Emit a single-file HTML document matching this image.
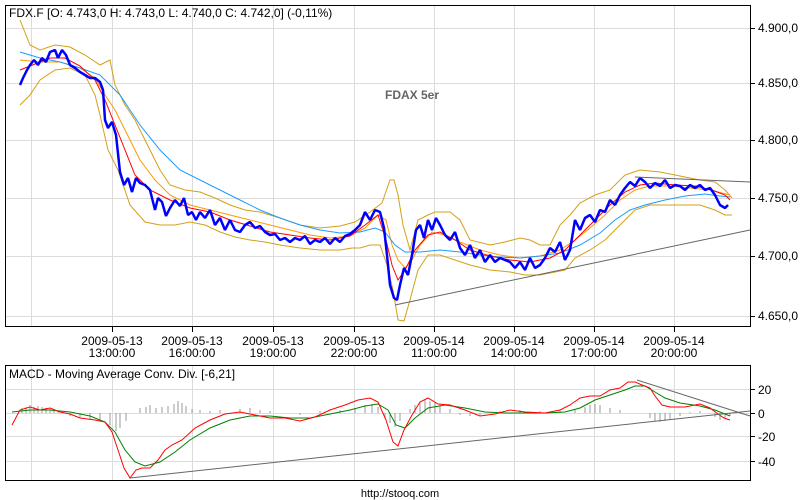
<!DOCTYPE html>
<html><head><meta charset="utf-8"><style>
html,body{margin:0;padding:0;background:#fff;width:800px;height:500px;overflow:hidden}
svg text{font-family:"Liberation Sans",sans-serif;font-size:12px;fill:#000}
</style></head><body>
<svg width="800" height="500" xmlns="http://www.w3.org/2000/svg">
<rect width="800" height="500" fill="#fff"/>
<g stroke="#dcdcdc" stroke-width="1">
<path d="M31.5 5V327M112.5 5V327M192.5 5V327M273.5 5V327M354.5 5V327M434.5 5V327M514.5 5V327M594.5 5V327M674.5 5V327"/>
<path d="M5 28.5H750M5 83.5H750M5 140.5H750M5 198.5H750M5 256.5H750M5 316.5H750"/>
<path d="M31.5 365V480M112.5 365V480M192.5 365V480M273.5 365V480M354.5 365V480M434.5 365V480M514.5 365V480M594.5 365V480M674.5 365V480"/>
<path d="M5 389.5H750M5 413.5H750M5 436.5H750M5 461.5H750"/>
</g>
<!-- bands -->
<g fill="none" stroke-width="1">
<path stroke="#d4a017" d="M20 20L30 45L40 50L55 45L70 47L85 55L100 65L110 60L115 85L125 105L135 120L150 150L160 170L170 185L185 190L200 192L215 198L230 205L245 210L260 212L280 218L300 225L320 228L340 226L355 222L370 212L382 203L390 180L394 180L398 195L403 225L410 250L418 220L428 215L435 212L450 212L460 220L470 240L490 245L505 242L520 238L530 240L540 245L550 245L560 225L570 215L580 203L595 195L610 190L625 175L640 170L660 172L680 176L700 180L715 182L725 190L732 198"/>
<path stroke="#d4a017" d="M20 105L30 95L40 80L55 70L70 68L85 75L95 95L100 115L108 150L118 170L130 205L145 222L160 225L175 225L190 222L205 225L220 232L235 237L250 240L265 242L280 245L300 248L320 250L340 250L352 248L360 248L370 245L380 245L387 265L393 290L398 320L404 321L410 300L418 270L428 255L440 255L455 260L470 265L490 270L510 272L525 275L540 275L555 272L565 270L575 258L590 250L605 240L620 225L635 210L650 205L665 205L685 205L700 205L715 210L725 215L732 215"/>
<path stroke="#ff9900" d="M20 60L40 62L60 62L80 68L95 78L105 95L115 110L125 130L140 160L155 180L170 195L190 205L210 210L230 215L250 220L270 225L290 230L310 235L330 238L350 236L365 228L378 215L386 220L392 245L398 260L405 268L412 260L420 245L432 232L445 235L460 242L480 250L500 255L520 258L540 256L560 250L575 240L590 228L605 215L620 200L635 190L650 186L670 186L690 188L710 190L730 195"/>
<path stroke="#1e9bff" d="M20 52L40 58L60 62L80 68L100 75L120 95L140 125L160 150L180 170L200 180L220 190L240 200L260 210L280 218L300 225L320 230L340 233L360 232L375 228L385 232L395 245L405 252L420 252L440 250L460 252L480 255L500 257L520 258L540 256L560 253L580 245L600 233L615 220L630 210L645 205L665 200L685 196L705 194L720 196L730 197"/>
<path stroke="#ff0000" d="M20 70L35 64L50 58L65 58L80 66L95 80L105 100L115 125L125 150L135 175L150 190L170 200L190 208L210 212L230 220L250 226L270 232L290 235L310 238L330 240L350 236L365 225L378 215L386 240L392 265L398 280L405 270L415 250L428 235L440 232L455 240L470 250L490 256L510 260L530 262L550 258L565 250L580 235L595 220L610 205L625 192L640 185L655 183L675 185L695 186L712 190L725 195L730 200"/>
</g>
<!-- price -->
<path fill="none" stroke="#0000ff" stroke-width="2.5" stroke-linejoin="bevel" d="M20 85L23 78L27 70L30 65L34 60L38 65L42 58L46 62L50 52L55 50L58 58L62 50L66 55L70 65L75 68L80 72L85 75L90 78L95 78L100 82L103 90L105 120L108 128L112 122L116 135L120 172L124 185L128 178L132 192L136 178L140 183L145 185L150 190L155 210L158 198L162 202L166 216L170 208L175 200L180 206L184 198L188 215L192 212L196 220L200 212L205 218L210 210L215 225L220 218L225 230L230 220L235 230L240 232L245 225L250 222L255 228L260 226L265 232L270 235L275 234L280 240L285 238L290 242L295 238L300 240L305 236L310 244L315 240L320 242L325 238L330 244L335 238L340 242L345 236L350 234L355 230L360 225L365 212L370 220L375 210L380 212L384 228L387 255L390 285L394 298L397 300L400 285L404 268L408 275L412 255L416 230L420 225L424 238L428 220L432 230L436 218L440 225L445 235L450 240L455 232L460 248L465 255L470 245L475 258L480 250L485 262L490 255L495 262L500 258L505 260L510 262L515 268L520 262L525 270L530 258L535 268L540 265L545 258L550 248L555 252L560 242L565 260L570 250L575 220L580 230L585 218L590 215L595 222L600 210L605 212L610 200L615 205L620 195L625 188L630 182L635 186L640 178L645 182L650 188L655 183L660 186L665 180L670 188L675 185L680 186L685 190L690 185L695 188L700 185L705 190L710 188L715 195L720 205L725 208L728 205"/>
<g stroke="#666" stroke-width="1"><path d="M395 305L750 230M635 177L750 182"/></g>
<rect x="5.5" y="5.5" width="745" height="321" fill="none" stroke="#000"/>
<text x="9" y="17">FDX.F [O: 4.743,0  H: 4.743,0  L: 4.740,0  C: 4.742,0] (-0,11%)</text>
<text x="385" y="99" style="font-weight:bold;fill:#666">FDAX 5er</text>
<g stroke="#000"><path d="M750 28.5h5M750 83.5h5M750 140.5h5M750 198.5h5M750 256.5h5M750 316.5h5M750 389.5h5M750 413.5h5M750 436.5h5M750 461.5h5"/>
<path d="M112.5 327v5M192.5 327v5M273.5 327v5M354.5 327v5M434.5 327v5M514.5 327v5M594.5 327v5M674.5 327v5"/></g>
<text x="758" y="32">4.900,0</text><text x="758" y="87">4.850,0</text><text x="758" y="144">4.800,0</text><text x="758" y="202">4.750,0</text><text x="758" y="260">4.700,0</text><text x="758" y="320">4.650,0</text>
<g text-anchor="middle">
<text x="112" y="345">2009-05-13</text><text x="112" y="357">13:00:00</text>
<text x="192" y="345">2009-05-13</text><text x="192" y="357">16:00:00</text>
<text x="273" y="345">2009-05-13</text><text x="273" y="357">19:00:00</text>
<text x="354" y="345">2009-05-13</text><text x="354" y="357">22:00:00</text>
<text x="434" y="345">2009-05-14</text><text x="434" y="357">11:00:00</text>
<text x="514" y="345">2009-05-14</text><text x="514" y="357">14:00:00</text>
<text x="594" y="345">2009-05-14</text><text x="594" y="357">17:00:00</text>
<text x="674" y="345">2009-05-14</text><text x="674" y="357">20:00:00</text>
<text x="400" y="497" style="font-size:11px">http://stooq.com</text>
</g>
<!-- MACD -->
<g stroke="#999" stroke-width="1" fill="none">
<path d="M22 413v-5M26 413v-6M30 413v-8M34 413v-6M38 413v-7M42 413v-6M46 413v-5M50 413v-4M54 413v-3M58 413v-2M70 413v3M80 413v5M90 413v6M100 413v8M110 413v12M116 413v18M120 413v15M126 413v8M140 413v-5M146 413v-6M150 413v-8M156 413v-5M162 413v-6M168 413v-7M174 413v-9M178 413v-12M182 413v-10M186 413v-7M192 413v-4M200 413v-3M210 413v-2M220 413v-3M240 413v-4M250 413v-5M260 413v-3M270 413v-2M300 413v2M320 413v-2M340 413v-3M355 413v-5M365 413v-8M372 413v-9M378 413v-6M385 413v6M390 413v10M395 413v14M400 413v8M410 413v-4M415 413v-8M420 413v-10M425 413v-13M430 413v-12M435 413v-10M440 413v-8M450 413v-4M460 413v2M470 413v3M480 413v2M500 413v-2M520 413v-3M540 413v-2M560 413v-3M575 413v-4M585 413v-6M590 413v-8M595 413v-9M600 413v-8M610 413v-5M620 413v-3M650 413v5M655 413v8M660 413v9M665 413v8M670 413v6M680 413v3M690 413v-1M700 413v-2M715 413v4M720 413v7M725 413v5M730 413v3"/>
</g>
<g fill="none" stroke-width="1">
<path stroke="#008000" d="M12 412L30 410L50 410L70 412L90 416L105 422L115 432L125 450L135 462L145 466L160 462L175 452L190 440L210 428L230 420L250 416L270 416L290 418L310 418L330 414L350 410L365 406L378 404L388 410L396 425L405 428L415 418L428 408L445 405L465 408L485 412L505 413L525 413L545 413L565 412L580 408L595 400L610 395L625 390L635 386L645 386L655 392L665 398L680 403L700 406L715 410L725 414L730 416"/>
<path stroke="#ff0000" d="M12 425L20 410L30 407L40 410L50 408L60 412L70 414L80 418L95 420L105 422L112 432L118 450L124 468L130 478L136 470L142 468L150 468L158 460L165 450L172 445L182 440L195 428L210 420L225 414L240 412L255 415L270 418L285 418L300 421L315 417L330 410L345 405L358 400L370 398L378 402L386 420L393 442L398 446L404 430L412 415L420 402L428 398L438 404L450 405L465 410L480 416L495 414L510 410L525 412L545 413L560 410L570 405L580 398L590 396L600 396L610 390L620 388L628 382L635 382L642 385L650 388L655 396L662 405L670 407L685 407L700 404L710 408L718 414L724 418L730 420"/>
</g>
<g stroke="#666" stroke-width="1"><path d="M130 478L750 411M637 380L750 416"/></g>
<rect x="5.5" y="365.5" width="745" height="115" fill="none" stroke="#000"/>
<text x="9" y="378">MACD - Moving Average Conv. Div. [-6,21]</text>
<text x="758" y="394">20</text><text x="758" y="418">0</text><text x="758" y="441">-20</text><text x="758" y="466">-40</text>
</svg>
</body></html>
